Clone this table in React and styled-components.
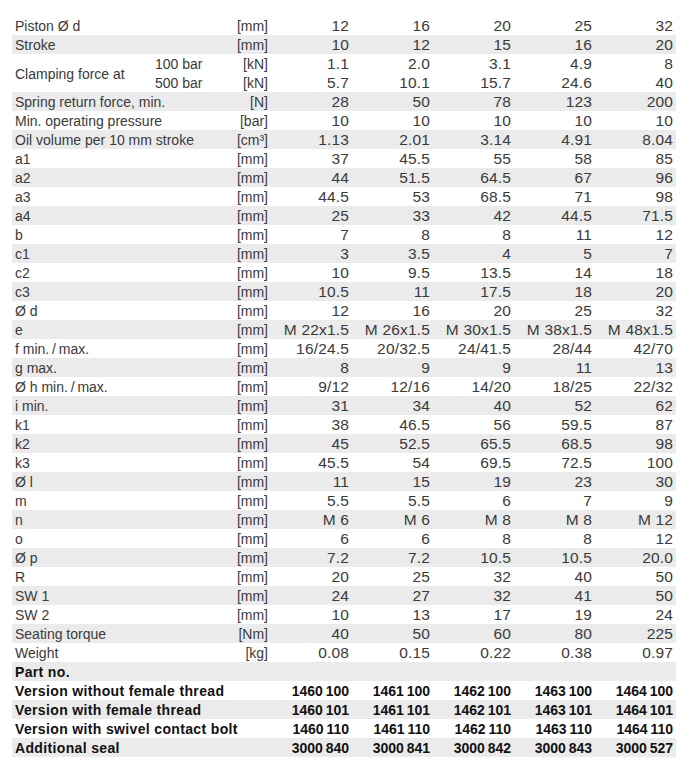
import React from "react";
import styled, { createGlobalStyle } from "styled-components";

const Global = createGlobalStyle`
  html, body { margin: 0; padding: 0; background: #fff; }
  body { font-family: "Liberation Sans", Arial, sans-serif; color: #3a3a3a; }
`;

const Page = styled.div`
  padding: 16px 17px 0 12px;
`;

const Table = styled.table`
  width: 664px;
  border-collapse: collapse;
  table-layout: fixed;
  font-size: 14px;
`;

const Row = styled.tr`
  height: 18.95px;
  background: ${(p) => (p.$shade ? "#ebebeb" : "transparent")};
`;

const Cell = styled.td`
  padding: 1px 3px 0;
  line-height: 18px;
  white-space: nowrap;
  text-align: left;
  font-weight: ${(p) => (p.$bold ? 700 : 400)};
  color: ${(p) => (p.$bold ? "#111" : "#3a3a3a")};
  letter-spacing: ${(p) => (p.$bold ? "0.35px" : "0")};
  vertical-align: ${(p) => (p.$middle ? "middle" : "top")};
`;

const UnitCell = styled(Cell)`
  text-align: right;
`;

const ValueCell = styled.td`
  padding: 1px 3px 0;
  line-height: 18px;
  white-space: nowrap;
  text-align: right;
  vertical-align: top;
  font-size: ${(p) => (p.$bold ? "14px" : "15.5px")};
  font-weight: ${(p) => (p.$bold ? 700 : 400)};
  color: ${(p) => (p.$bold ? "#111" : "#3a3a3a")};
  letter-spacing: ${(p) => (p.$bold ? "0" : "0.2px")};
  & > span {
    margin-right: ${(p) => (p.$bold ? "0" : "-0.2px")};
  }
`;

const Col = styled.col`
  width: ${(p) => p.$w}px;
`;

const th = "\u2009";

const regular = [
  ["Spring return force, min.", "[N]", ["28", "50", "78", "123", "200"]],
  ["Min. operating pressure", "[bar]", ["10", "10", "10", "10", "10"]],
  ["Oil volume per 10 mm stroke", "[cm³]", ["1.13", "2.01", "3.14", "4.91", "8.04"]],
  ["a1", "[mm]", ["37", "45.5", "55", "58", "85"]],
  ["a2", "[mm]", ["44", "51.5", "64.5", "67", "96"]],
  ["a3", "[mm]", ["44.5", "53", "68.5", "71", "98"]],
  ["a4", "[mm]", ["25", "33", "42", "44.5", "71.5"]],
  ["b", "[mm]", ["7", "8", "8", "11", "12"]],
  ["c1", "[mm]", ["3", "3.5", "4", "5", "7"]],
  ["c2", "[mm]", ["10", "9.5", "13.5", "14", "18"]],
  ["c3", "[mm]", ["10.5", "11", "17.5", "18", "20"]],
  ["Ø d", "[mm]", ["12", "16", "20", "25", "32"]],
  ["e", "[mm]", ["M 22x1.5", "M 26x1.5", "M 30x1.5", "M 38x1.5", "M 48x1.5"]],
  [`f min.${th}/${th}max.`, "[mm]", ["16/24.5", "20/32.5", "24/41.5", "28/44", "42/70"]],
  ["g max.", "[mm]", ["8", "9", "9", "11", "13"]],
  [`Ø h min.${th}/${th}max.`, "[mm]", ["9/12", "12/16", "14/20", "18/25", "22/32"]],
  ["i min.", "[mm]", ["31", "34", "40", "52", "62"]],
  ["k1", "[mm]", ["38", "46.5", "56", "59.5", "87"]],
  ["k2", "[mm]", ["45", "52.5", "65.5", "68.5", "98"]],
  ["k3", "[mm]", ["45.5", "54", "69.5", "72.5", "100"]],
  ["Ø l", "[mm]", ["11", "15", "19", "23", "30"]],
  ["m", "[mm]", ["5.5", "5.5", "6", "7", "9"]],
  ["n", "[mm]", ["M 6", "M 6", "M 8", "M 8", "M 12"]],
  ["o", "[mm]", ["6", "6", "8", "8", "12"]],
  ["Ø p", "[mm]", ["7.2", "7.2", "10.5", "10.5", "20.0"]],
  ["R", "[mm]", ["20", "25", "32", "40", "50"]],
  ["SW 1", "[mm]", ["24", "27", "32", "41", "50"]],
  ["SW 2", "[mm]", ["10", "13", "17", "19", "24"]],
  ["Seating torque", "[Nm]", ["40", "50", "60", "80", "225"]],
  ["Weight", "[kg]", ["0.08", "0.15", "0.22", "0.38", "0.97"]],
];

const parts = [
  ["Version without female thread", ["1460", "1461", "1462", "1463", "1464"].map((a) => a + th + "100")],
  ["Version with female thread", ["1460", "1461", "1462", "1463", "1464"].map((a) => a + th + "101")],
  ["Version with swivel contact bolt", ["1460", "1461", "1462", "1463", "1464"].map((a) => a + th + "110")],
  ["Additional seal", ["840", "841", "842", "843", "527"].map((a) => "3000" + th + a)],
];

function Values({ values, bold }) {
  return values.map((v, i) => (
    <ValueCell key={i} $bold={bold}>
      <span>{v}</span>
    </ValueCell>
  ));
}

export default function App() {
  let shade = true;
  const next = () => {
    shade = !shade;
    return shade;
  };
  return (
    <Page>
      <Global />
      <Table>
        <colgroup>
          <Col $w={140} />
          <Col $w={64} />
          <Col $w={55} />
          <Col $w={81} />
          <Col $w={81} />
          <Col $w={81} />
          <Col $w={81} />
          <Col $w={81} />
        </colgroup>
        <tbody>
          <Row $shade={next()}>
            <Cell colSpan={2}>Piston Ø d</Cell>
            <UnitCell>[mm]</UnitCell>
            <Values values={["12", "16", "20", "25", "32"]} />
          </Row>
          <Row $shade={next()}>
            <Cell colSpan={2}>Stroke</Cell>
            <UnitCell>[mm]</UnitCell>
            <Values values={["10", "12", "15", "16", "20"]} />
          </Row>
          {(() => {
            const s = next();
            return (
              <>
                <Row $shade={s}>
                  <Cell rowSpan={2} $middle>
                    Clamping force at
                  </Cell>
                  <Cell>100 bar</Cell>
                  <UnitCell>[kN]</UnitCell>
                  <Values values={["1.1", "2.0", "3.1", "4.9", "8"]} />
                </Row>
                <Row $shade={s}>
                  <Cell>500 bar</Cell>
                  <UnitCell>[kN]</UnitCell>
                  <Values values={["5.7", "10.1", "15.7", "24.6", "40"]} />
                </Row>
              </>
            );
          })()}
          {regular.map(([label, unit, values]) => (
            <Row key={label} $shade={next()}>
              <Cell colSpan={2}>{label}</Cell>
              <UnitCell>{unit}</UnitCell>
              <Values values={values} />
            </Row>
          ))}
          <Row $shade={next()}>
            <Cell colSpan={8} $bold>
              Part no.
            </Cell>
          </Row>
          {parts.map(([label, values]) => (
            <Row key={label} $shade={next()}>
              <Cell colSpan={3} $bold>
                {label}
              </Cell>
              <Values values={values} bold />
            </Row>
          ))}
        </tbody>
      </Table>
    </Page>
  );
}
